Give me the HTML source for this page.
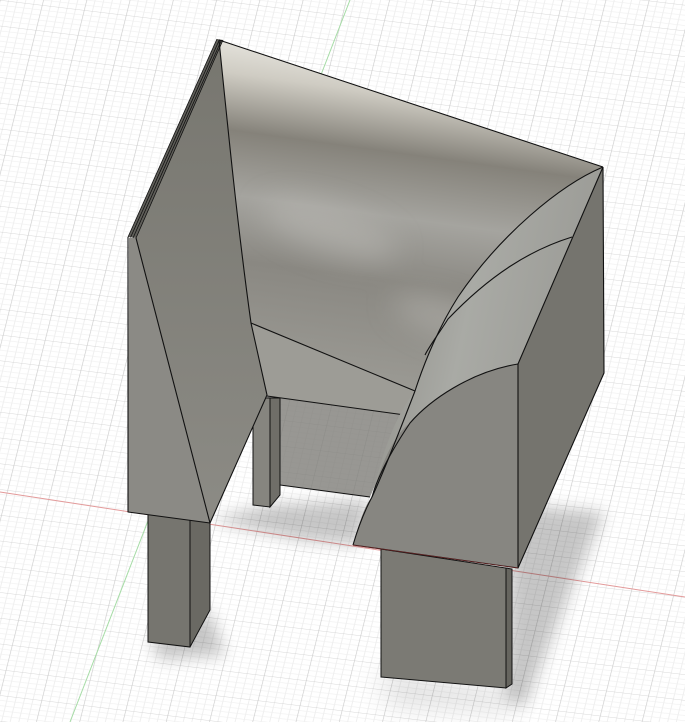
<!DOCTYPE html>
<html><head><meta charset="utf-8"><style>html,body{margin:0;padding:0;background:#fff;overflow:hidden}svg{display:block}</style></head>
<body>
<svg width="685" height="722" viewBox="0 0 685 722" xmlns="http://www.w3.org/2000/svg">
<defs>
<pattern id="g" width="40" height="40" patternUnits="userSpaceOnUse" patternTransform="matrix(1.05,0.126,-0.156,0.625,0,0)">
<g stroke="#efefef" stroke-width="0.9">
<path d="M8 0V40M16 0V40M24 0V40M32 0V40M0 8H40M0 16H40M0 24H40M0 32H40"/></g>
<path d="M0 0V40M0 0H40" stroke="#cbcbcb" stroke-width="1.2"/>
</pattern>
<linearGradient id="inner" x1="0.5" y1="0" x2="0.35" y2="1">
<stop offset="0" stop-color="#f4f3ee"/>
<stop offset="0.16" stop-color="#cfccc3"/>
<stop offset="0.32" stop-color="#85827a"/>
<stop offset="0.5" stop-color="#a5a49f"/>
<stop offset="0.68" stop-color="#8a8882"/>
<stop offset="1" stop-color="#9c9b95"/>
</linearGradient>
<linearGradient id="band" x1="0" y1="0" x2="1" y2="0.3">
<stop offset="0" stop-color="#8a8983"/>
<stop offset="0.5" stop-color="#a9aaa5"/>
<stop offset="1" stop-color="#9a9a95"/>
</linearGradient>
<linearGradient id="lw" x1="0" y1="0" x2="0" y2="1">
<stop offset="0" stop-color="#77766f"/>
<stop offset="1" stop-color="#8c8b85"/>
</linearGradient>
<filter id="bl" x="-20%" y="-20%" width="140%" height="140%"><feGaussianBlur stdDeviation="8"/></filter>
<filter id="bl2" x="-50%" y="-50%" width="200%" height="200%"><feGaussianBlur stdDeviation="14"/></filter>
</defs>
<rect width="685" height="722" fill="#fff"/>
<rect width="685" height="722" fill="url(#g)"/>
<line x1="0" y1="492" x2="685" y2="597" stroke="#e39a9a" stroke-width="1"/>
<line x1="350" y1="0" x2="70" y2="722" stroke="#a6dca6" stroke-width="1"/>
<g fill="#000" opacity="0.22" filter="url(#bl)">
<polygon points="515,505 605,512 575,580 525,705 505,700 510,570"/>
<polygon points="150,640 210,610 225,655 160,660"/>
<polygon points="210,520 270,505 370,500 360,545 300,540"/>
</g>
<g fill="#000" opacity="0.12" filter="url(#bl2)">
<polygon points="380,670 510,690 520,710 390,705"/>
</g>
<polygon points="267,396 405,415 370,497 280,485" fill="#7e7d78" opacity="0.8"/>
<polygon points="253,398 270,398 270,507 253,505" fill="#86857f" stroke="#111" stroke-width="1"/>
<polygon points="270,398 280,398 280,495 270,507" fill="#6f6e68" stroke="#111" stroke-width="1"/>
<line x1="280" y1="485" x2="370" y2="497" stroke="#111" stroke-width="1"/>
<polygon points="148,512 190,518 190,647 148,642" fill="#76756f" stroke="#111" stroke-width="1"/>
<polygon points="190,518 210,522 210,610 190,647" fill="#6a6963" stroke="#111" stroke-width="1"/>
<polygon points="381,549 506,568 506,688 381,677" fill="#7b7a74" stroke="#111" stroke-width="1"/>
<polygon points="506,568 512,569 512,684 506,688" fill="#66655f" stroke="#111" stroke-width="1"/>
<path d="M219,40 L603,167 C560,185 500,235 458,297 C440,325 425,360 415,391 L251,323 C238,230 228,130 219,40 Z" fill="url(#inner)"/>
<g filter="url(#bl2)" opacity="0.5">
<ellipse cx="330" cy="230" rx="70" ry="22" fill="#bdbcb7" transform="rotate(18 330 230)"/>
<ellipse cx="450" cy="320" rx="60" ry="18" fill="#b7b6b1" transform="rotate(18 450 320)"/>
</g>
<path d="M251,323 L415,391 L405,415 L267,396 Z" fill="#9d9c96"/>
<line x1="267" y1="396" x2="405" y2="415" stroke="#111" stroke-width="1"/>
<path d="M219,40 C228,130 238,230 251,323 L267,395 L210,523 L136,238 Z" fill="url(#lw)"/>
<path d="M129,238 L136,238 L210,523 L128,512 Z" fill="#8b8a85"/>
<polygon points="217,39 223,40 136,238 128,237" fill="#5f5e59"/>
<g stroke="#111" stroke-width="0.8" fill="none">
<path d="M217,39 L128,237 M219.5,39.5 L130.5,237.5 M221.5,40 L133,238 M223,40 L136,238"/>
</g>
<polygon points="603,167 604,373 518,568 518,364" fill="#75746e"/>
<path d="M603,167 L518,364 C470,372 430,400 410,423 C392,450 378,475 372,497 C385,440 400,410 415,391 C425,360 440,325 458,297 C500,235 560,185 603,167 Z" fill="url(#band)"/>
<path d="M518,364 L518,568 L353,545 C360,520 365,505 372,497 C385,450 400,430 410,423 C430,400 470,372 518,364 Z" fill="#878681"/>
<g stroke="#111" stroke-width="1.1" fill="none" stroke-linejoin="round">
<path d="M219,40 L603,167"/>
<path d="M219,40 C228,130 238,230 251,323 L267,395 L210,523"/>
<path d="M136,238 L210,523 M128,237 L128,512 L210,523"/>
<path d="M251,323 L415,391"/>
<path d="M603,167 C560,185 500,235 458,297 C440,325 425,360 415,391 C400,430 380,480 372,497 C365,510 358,528 353,545"/>
<path d="M572,237 C530,250 490,275 448,319 C438,335 430,345 425,355"/>
<path d="M518,364 C470,372 430,400 410,423 C392,450 378,475 372,497"/>
<path d="M603,167 L604,373 L518,568 L353,545 M603,167 L518,364 L518,568"/>
</g>
<line x1="353" y1="545" x2="518" y2="568" stroke="#a03030" stroke-width="0.8" opacity="0.6"/>
</svg>
</body></html>
